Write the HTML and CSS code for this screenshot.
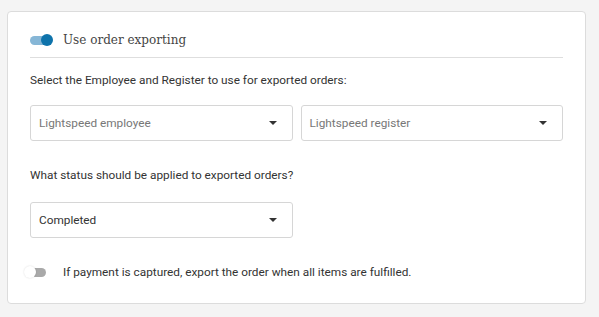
FILE: index.html
```html
<!DOCTYPE html>
<html>
<head>
<meta charset="utf-8">
<link rel="stylesheet" href="styles.css">
</head>
<body>
<div class="card">
  <div class="header">
    <span class="toggle on"><span class="track"></span><span class="knob"></span></span>
    <span class="title">Use order exporting</span>
  </div>
  <p class="label first">Select the Employee and Register to use for exported orders:</p>
  <div class="row">
    <div class="select placeholder"><span>Lightspeed employee</span><span class="caret"></span></div>
    <div class="select placeholder"><span>Lightspeed register</span><span class="caret"></span></div>
  </div>
  <p class="label second">What status should be applied to exported orders?</p>
  <div class="row">
    <div class="select"><span>Completed</span><span class="caret"></span></div>
  </div>
  <div class="option">
    <span class="toggle off"><span class="track"></span><span class="knob"></span></span>
    <span class="option-text">If payment is captured, export the order when all items are fulfilled.</span>
  </div>
</div>
</body>
</html>
```

FILE: styles.css
```css
html, body {
  margin: 0;
  padding: 0;
  background: #f4f4f4;
}
body {
  padding: 11px 13px 0 7px;
  font-family: Roboto, "Liberation Sans", sans-serif;
  color: #333;
}
.card {
  background: #fff;
  border: 1px solid #dcdcdc;
  border-radius: 4px;
  padding: 0 22px 0 22px;
  height: 293px;
  box-sizing: border-box;
}
.header {
  display: flex;
  align-items: center;
  height: 46px;
  box-sizing: border-box;
  padding-top: 21px;
  padding-bottom: 11px;
  border-bottom: 1px solid #dedede;
}
.toggle {
  position: relative;
  display: inline-block;
  width: 24px;
  height: 14px;
  flex: none;
}
.toggle .track {
  position: absolute;
  left: 0;
  top: 3px;
  width: 18px;
  height: 9px;
  border-radius: 5px;
}
.toggle .knob {
  position: absolute;
  top: 1px;
  width: 12px;
  height: 12px;
  border-radius: 50%;
}
.toggle.on .track { background: #86b6d6; }
.toggle.on .knob { left: 11px; background: #0e73ab; }
.toggle.off .track { left: 6px; width: 15px; background: #a9a9a9; }
.toggle.off .knob { left: -1px; background: #fff; box-shadow: 0 0 2px rgba(0,0,0,0.15); }
.title {
  margin-left: 9px;
  font-family: "DejaVu Serif", "Liberation Serif", serif;
  font-size: 12px;
  color: #444;
  line-height: 14px;
}
.label {
  margin: 0;
  font-size: 11.8px;
  color: #333;
  line-height: 16px;
}
.label.first { padding-top: 14px; padding-bottom: 17px; }
.label.second { padding-top: 26px; padding-bottom: 19px; }
.row {
  display: grid;
  grid-template-columns: 1fr 1fr;
  gap: 8px;
}
.select {
  height: 36px;
  box-sizing: border-box;
  border: 1px solid #d6d6d6;
  border-radius: 3px;
  display: flex;
  align-items: center;
  justify-content: space-between;
  padding: 0 15px 0 8px;
  font-size: 11.8px;
  color: #333;
}
.select.placeholder { color: #777; }
.caret {
  width: 0;
  height: 0;
  border-left: 4px solid transparent;
  border-right: 4px solid transparent;
  border-top: 4px solid #333;
}
.option {
  display: flex;
  align-items: center;
  margin-top: 27px;
  margin-left: -5px;
}
.option-text {
  margin-left: 14px;
  font-size: 11.8px;
  color: #333;
}
```
